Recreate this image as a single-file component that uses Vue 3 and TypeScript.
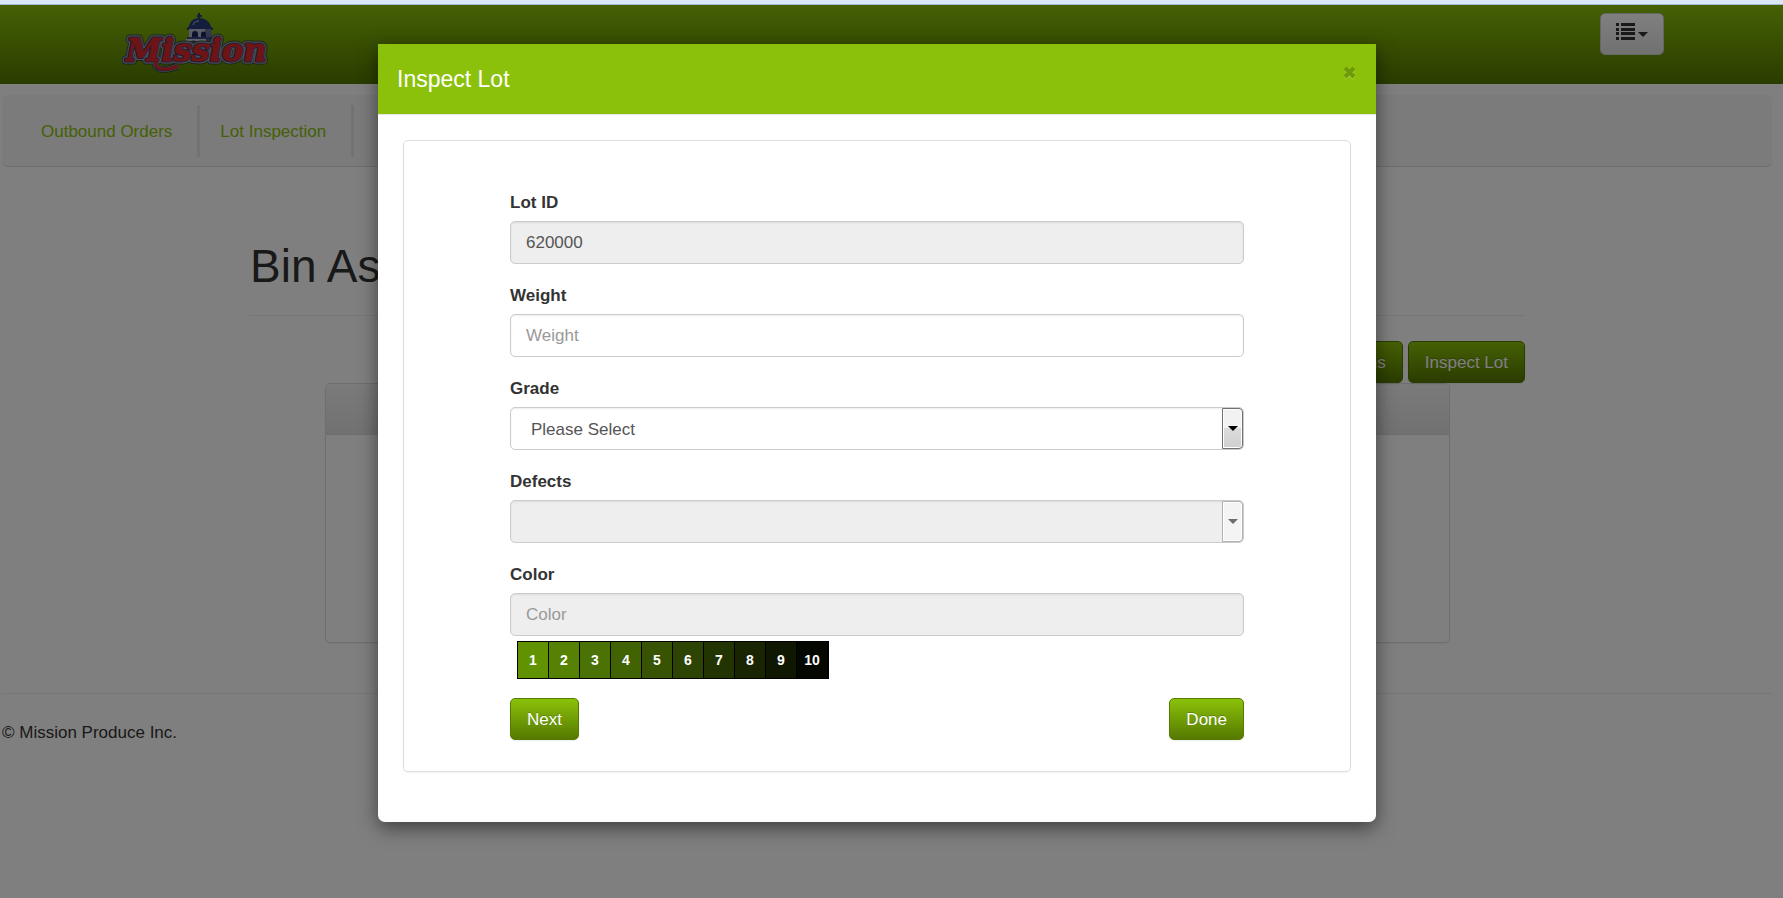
<script setup lang="ts">
import { ref } from 'vue'

interface Swatch {
  value: number
  color: string
}

const navLinks: string[] = ['Outbound Orders', 'Lot Inspection']

const swatches: Swatch[] = [
  { value: 1, color: '#609202' },
  { value: 2, color: '#558203' },
  { value: 3, color: '#4b7204' },
  { value: 4, color: '#416304' },
  { value: 5, color: '#375303' },
  { value: 6, color: '#2e4404' },
  { value: 7, color: '#233403' },
  { value: 8, color: '#192403' },
  { value: 9, color: '#0f1602' },
  { value: 10, color: '#050800' },
]

const lotId = ref('620000')
const weight = ref('')
const grade = ref('')
const defects = ref('')
const color = ref('')
</script>

<template>
  <div class="screen">
    <div class="topline"></div>

    <header class="navbar">
      <a class="brand" href="#" aria-label="Mission">
        <svg width="150" height="64" viewBox="0 0 150 64">
          <g class="tower">
            <path d="M77 0v7M75 3h5" stroke="#2b3a78" stroke-width="2" fill="none" />
            <path d="M67 13c1-5 5-8 10-8s11 3 12 9l2 1v2H65v-2z" fill="#2b3a78" />
            <path d="M71 12c1-3 3-4 6-4" stroke="#aab6d8" stroke-width="1" fill="none" />
            <path d="M67 16h22v16H67z" fill="#b4bacb" />
            <path d="M83 16h6l2 16h-8z" fill="#65709a" />
            <path d="M70 24v-3a3 3 0 0 1 6 0v3zM79 24v-3a2 2 0 0 1 5 0v3z" fill="#1b2658" />
            <path d="M65 24h26v2H65z" fill="#3a4780" />
            <path d="M64 26h20v16H64z" fill="#c2c7d4" />
            <path d="M84 26h8v16h-8z" fill="#4c5887" />
            <path d="M67 38v-6a4 4 0 0 1 9 0v6z" fill="#34427c" />
            <path d="M69 38v-5a2 2 0 0 1 5 0v5z" fill="#aab6d8" />
          </g>
          <g class="wordmark">
            <path class="edge-dark" d="M34 49c-3 9 10 9 22 4" />
            <text class="edge-dark" x="4" y="48">Mission</text>
            <path class="edge-light" d="M34 49c-3 9 10 9 22 4" />
            <text class="edge-light" x="4" y="48">Mission</text>
            <path class="edge-inner swash-edge" d="M34 49c-3 9 10 9 22 4" />
            <text class="edge-inner" x="4" y="48">Mission</text>
            <path class="swash" d="M34 48c-3 9 10 10 22 5" />
            <text class="letters" x="4" y="48">Mission</text>
          </g>
        </svg>
      </a>
      <button class="menu-button" type="button" aria-label="Menu">
        <svg width="32" height="18" viewBox="0 0 32 18">
          <path
            d="M0 0h3v3H0zM5 0h14v3H5zM0 5h3v3H0zM5 5h14v3H5zM0 9h3v3H0zM5 9h14v3H5zM0 14h3v3H0zM5 14h14v3H5zM22 9h10l-5 5z"
            fill="#333"
          />
        </svg>
      </button>
    </header>

    <nav class="subnav">
      <a v-for="link in navLinks" :key="link" href="#">{{ link }}</a>
    </nav>

    <div class="page">
      <main class="container">
        <h1>Bin Assets</h1>
        <div class="actions">
          <button class="btn" type="button">Bins</button>
          <button class="btn" type="button">Inspect Lot</button>
        </div>
        <section class="card">
          <div class="card-head"></div>
        </section>
      </main>
    </div>

    <footer class="footer">© Mission Produce Inc.</footer>

    <div class="backdrop">
      <section class="modal" role="dialog" aria-labelledby="modal-title">
        <header class="modal-head">
          <h2 id="modal-title">Inspect Lot</h2>
          <button class="close" type="button" aria-label="Close">
            <svg width="13" height="15" viewBox="0 0 13 15">
              <path d="M2 3l9 9M11 3l-9 9" stroke="#a5d23f" stroke-width="4" />
              <path d="M2 2l9 9M11 2l-9 9" stroke="#6f9a08" stroke-width="4" />
            </svg>
          </button>
        </header>
        <form class="panel" @submit.prevent>
          <div class="group">
            <label for="lot">Lot ID</label>
            <input id="lot" v-model="lotId" class="control" type="text" disabled />
          </div>
          <div class="group">
            <label for="weight">Weight</label>
            <input id="weight" v-model="weight" class="control" type="text" placeholder="Weight" />
          </div>
          <div class="group">
            <label for="grade">Grade</label>
            <div class="select">
              <select id="grade" v-model="grade" class="control">
                <option value="">Please Select</option>
              </select>
              <span class="arrow"></span>
            </div>
          </div>
          <div class="group">
            <label for="defects">Defects</label>
            <div class="select">
              <select id="defects" v-model="defects" class="control" disabled></select>
              <span class="arrow arrow-off"></span>
            </div>
          </div>
          <div class="group color-group">
            <label for="color">Color</label>
            <input id="color" v-model="color" class="control" type="text" placeholder="Color" disabled />
          </div>
          <div class="swatches">
            <button
              v-for="s in swatches"
              :key="s.value"
              type="button"
              :style="{ backgroundColor: s.color }"
              @click="color = String(s.value)"
            >
              {{ s.value }}
            </button>
          </div>
          <div class="form-actions">
            <button class="btn" type="button">Next</button>
            <button class="btn" type="submit">Done</button>
          </div>
        </form>
      </section>
    </div>
  </div>
</template>

<style>
body {
  margin: 0;
  background: #fff;
}
</style>

<style scoped>
.screen {
  position: relative;
  min-height: 100vh;
  box-sizing: border-box;
  font-family: 'Liberation Sans', Arial, sans-serif;
  font-size: 17px;
  line-height: 25px;
  color: #333;
}

.screen * {
  box-sizing: border-box;
}

button,
input,
select {
  font: inherit;
}

.topline {
  height: 5px;
  background: #dbe8f8;
  border-bottom: 1px solid #a3b9d4;
}

.navbar {
  display: flex;
  justify-content: space-between;
  align-items: flex-start;
  height: 79px;
  padding: 8px 119px 0 122px;
  background: linear-gradient(#8bc10a, #547900);
}

.brand svg {
  display: block;
}

.wordmark {
  font: italic bold 32px 'DejaVu Serif', serif;
  stroke-linejoin: round;
}

.edge-dark {
  fill: none;
  stroke: #3c4a30;
  stroke-width: 7px;
}

.edge-light {
  fill: none;
  stroke: #9ba3bc;
  stroke-width: 5px;
}

.edge-inner {
  fill: none;
  stroke: #38406c;
  stroke-width: 3px;
}

.swash-edge {
  stroke-width: 4px;
}

.swash {
  fill: none;
  stroke: #d8282c;
  stroke-width: 3px;
}

.letters {
  fill: #d8282c;
  stroke: #d8282c;
  stroke-width: 1px;
}

.menu-button {
  display: flex;
  align-items: center;
  justify-content: center;
  width: 64px;
  height: 42px;
  padding: 0 0 4px;
  border: 1px solid #ccc;
  border-radius: 5px;
  background: linear-gradient(#fff, #e2e2e2);
}

.subnav {
  display: flex;
  margin: 11px 11px 0 2px;
  padding: 10px 19px 9px;
  border-radius: 5px;
  background: #f6f6f6;
  border-bottom: 1px solid #dcdcdc;
}

.subnav a {
  padding: 14px 25px 13px 20px;
  border-right: 3px solid #e4e4e4;
  color: #8bc10a;
  text-decoration: none;
}

.page {
  padding-right: 8px;
}

.container {
  max-width: 1275px;
  margin: 0 auto;
}

h1 {
  margin: 73px 0 25px;
  padding-bottom: 23px;
  border-bottom: 1px solid #eee;
  font-size: 46px;
  line-height: 52px;
  font-weight: 400;
}

.actions {
  display: flex;
  justify-content: flex-end;
  gap: 5px;
}

.btn {
  height: 42px;
  padding: 0 16px;
  border: 1px solid #557b00;
  border-radius: 5px;
  background: linear-gradient(#8bc10a, #557900);
  color: #fff;
  text-shadow: 0 -1px 0 rgba(0, 0, 0, 0.2);
  box-shadow: 0 1px 2px rgba(0, 0, 0, 0.08);
}

.card {
  height: 260px;
  margin: 0 75px;
  border: 1px solid #ddd;
  border-radius: 5px;
  box-shadow: 0 1px 2px rgba(0, 0, 0, 0.05);
}

.card-head {
  height: 51px;
  border-bottom: 1px solid #ddd;
  border-radius: 4px 4px 0 0;
  background: linear-gradient(#f5f5f5, #e3e3e3);
}

.footer {
  margin: 50px 11px 0 2px;
  padding-top: 26px;
  border-top: 1px solid #eee;
}

.backdrop {
  position: absolute;
  inset: 5px 0 0;
  padding: 39px 29px 0 0;
  background: rgba(0, 0, 0, 0.5);
}

.modal {
  max-width: 998px;
  margin: 0 auto;
  padding-bottom: 50px;
  border-radius: 0 0 7px 7px;
  background: #fff;
  box-shadow: 0 6px 19px rgba(0, 0, 0, 0.5);
}

.modal-head {
  display: flex;
  justify-content: space-between;
  align-items: flex-start;
  height: 71px;
  padding: 19px 20px 0 19px;
  border-bottom: 1px solid #e5e5e5;
  background: #8bc10a;
}

h2 {
  margin: 0;
  font-size: 23px;
  line-height: 32px;
  font-weight: 400;
  color: #fff;
}

.close {
  padding: 3px 0 0;
  border: 0;
  background: none;
}

.close svg {
  display: block;
}

.panel {
  margin: 25px 25px 0;
  padding: 49px 106px 31px;
  border: 1px solid #ddd;
  border-radius: 5px;
  box-shadow: 0 1px 2px rgba(0, 0, 0, 0.05);
}

.group {
  margin-bottom: 19px;
}

.color-group {
  margin-bottom: 5px;
}

label {
  display: block;
  margin-bottom: 6px;
  font-weight: 700;
}

.control {
  display: block;
  width: 100%;
  height: 43px;
  padding: 1px 15px 0;
  border: 1px solid #ccc;
  border-radius: 5px;
  background: #fff;
  box-shadow: inset 0 1px 2px rgba(0, 0, 0, 0.08);
  color: #555;
  opacity: 1;
  appearance: none;
}

.control:disabled {
  background: #eee;
}

.control::placeholder {
  color: #999;
  opacity: 1;
}

select.control {
  padding-left: 20px;
}

.select {
  position: relative;
}

.arrow {
  position: absolute;
  top: 1px;
  right: 1px;
  bottom: 1px;
  display: flex;
  align-items: center;
  justify-content: center;
  width: 21px;
  border: 1px solid #707070;
  border-radius: 0 4px 4px 0;
  background: linear-gradient(#f2f2f2 50%, #dcdcdc 50%, #cfcfcf);
  box-shadow: inset 0 0 0 1px #fff;
  pointer-events: none;
}

.arrow::after {
  content: '';
  border: 5px solid transparent;
  border-top-color: #000;
  border-bottom: 0;
}

.arrow-off {
  border-color: #adb2b5;
  background: #f4f4f4;
}

.arrow-off::after {
  border-top-color: #6d6d6d;
}

.swatches {
  display: inline-flex;
  margin-left: 7px;
  border: 1px solid #000;
  vertical-align: top;
}

.swatches button {
  width: 31px;
  height: 36px;
  padding: 0;
  border: 0;
  border-right: 1px solid #000;
  font-size: 14px;
  font-weight: 700;
  color: #fff;
}

.form-actions {
  display: flex;
  justify-content: space-between;
  margin-top: 19px;
}
</style>
